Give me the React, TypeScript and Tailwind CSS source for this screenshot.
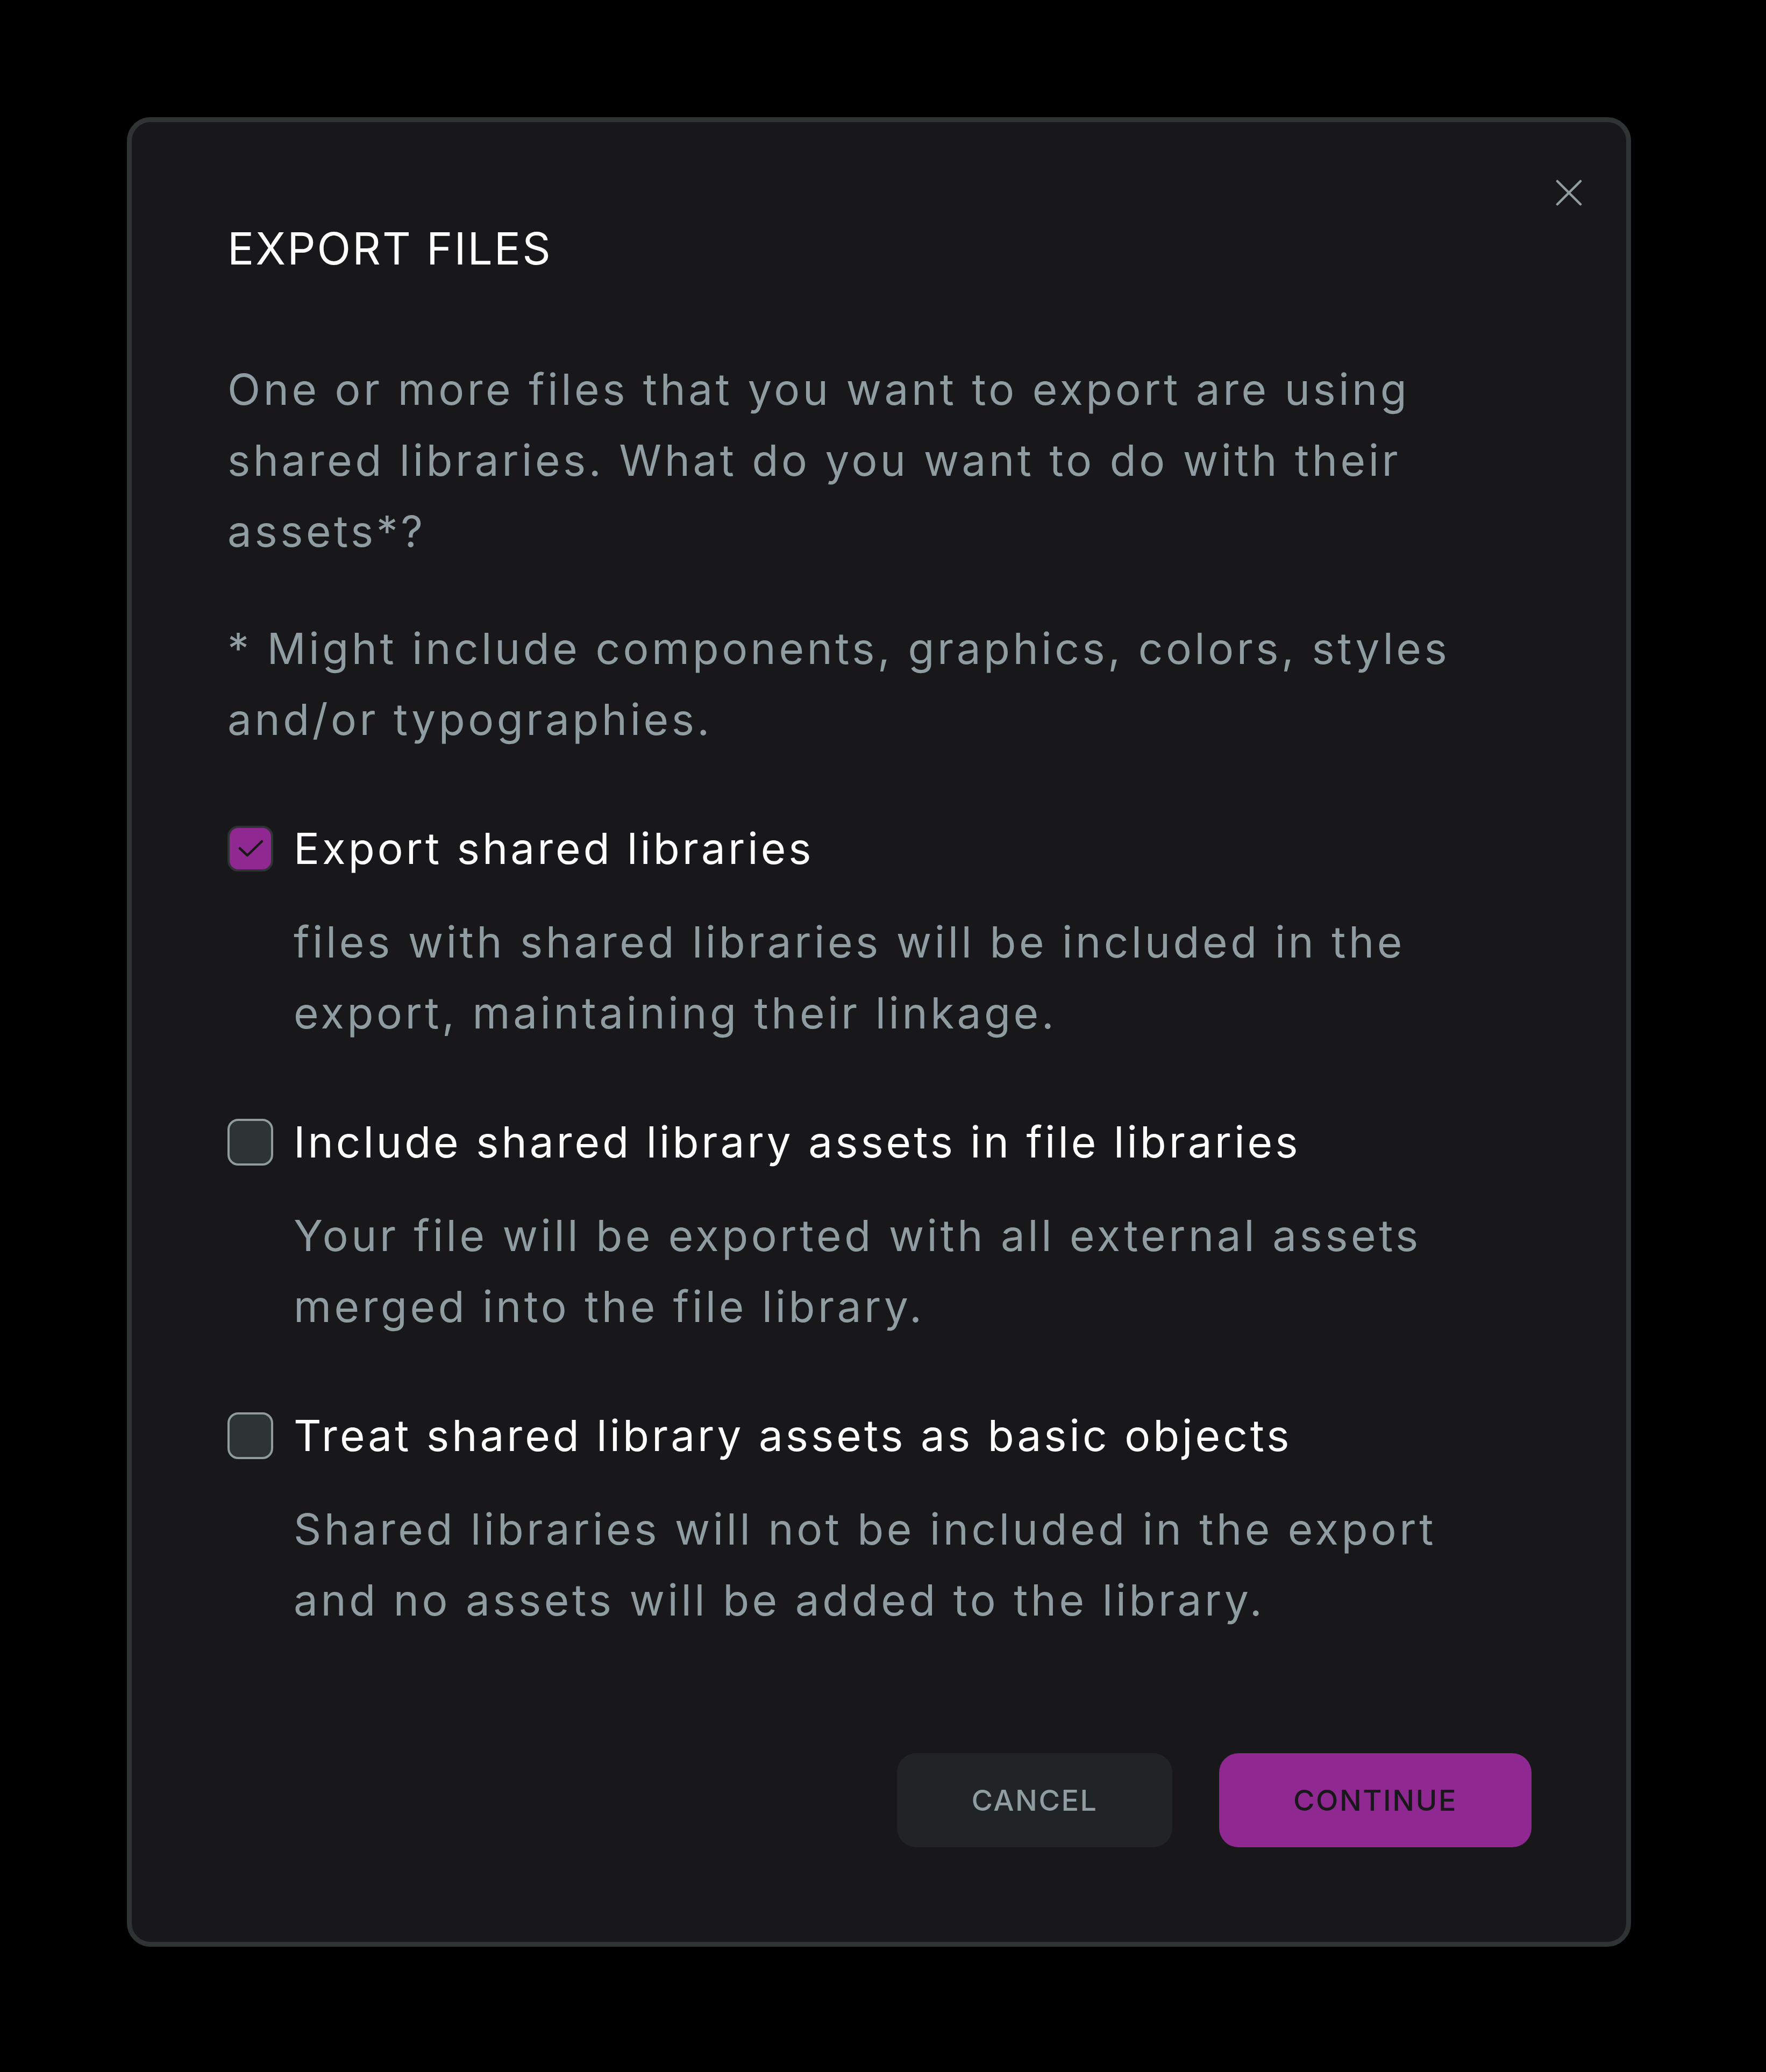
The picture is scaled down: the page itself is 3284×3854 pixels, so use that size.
import React from "react";

const font = { fontFamily: "Inter, 'Noto Sans', sans-serif" };

function Option({
  checked,
  label,
  lines,
  top,
}: {
  checked: boolean;
  label: string;
  lines: string[];
  top: string;
}) {
  return (
    <div className={`flex flex-col ${top}`}>
      <div className="flex items-center gap-[38px]">
        {checked ? (
          <div className="flex h-[85px] w-[85px] shrink-0 items-center justify-center rounded-[20px] border-[4px] border-[#2e3434] bg-[#8f2890]">
            <svg width="52" height="40" viewBox="0 0 52 40" fill="none">
              <path d="M6 20 L20 33 L47 7" stroke="#18181a" strokeWidth="4.5" strokeLinecap="round" strokeLinejoin="round" />
            </svg>
          </div>
        ) : (
          <div className="h-[87px] w-[85px] shrink-0 rounded-[20px] border-[4px] border-[#909b9b] bg-[#2e3434]" />
        )}
        <div className="whitespace-nowrap text-[80px] leading-[132px] tracking-[5px] text-white">{label}</div>
      </div>
      <div className="mt-[42px] whitespace-nowrap pl-[123px] text-[80px] leading-[132px] tracking-[5.5px] text-[#8f9da3]">
        {lines.map((l, i) => (
          <div key={i}>{l}</div>
        ))}
      </div>
    </div>
  );
}

export default function App() {
  return (
    <div className="min-h-[3854px] w-[3284px] bg-black pl-[236px] pt-[218px]" style={font}>
      <div className="relative flex h-[3403px] w-[2797px] flex-col rounded-[44px] border-[9px] border-[#2e3434] bg-[#18181a] pb-[176px] pl-[178px] pr-[176px] pt-[186px]">
        <button className="absolute right-[82px] top-[107px] h-[49px] w-[49px]">
          <svg width="49" height="49" viewBox="0 0 49 49" fill="none">
            <path d="M3 3 L46 46 M46 3 L3 46" stroke="#8f9da3" strokeWidth="4.5" strokeLinecap="round" />
          </svg>
        </button>
        <h1 className="text-[82px] font-normal leading-[100px] tracking-[3px] text-white">EXPORT FILES</h1>
        <div className="mt-[145px] whitespace-nowrap text-[80px] leading-[132px] tracking-[5.5px] text-[#8f9da3]">
          <div>One or more files that you want to export are using</div>
          <div>shared libraries. What do you want to do with their</div>
          <div>assets*?</div>
        </div>
        <div className="mt-[86px] whitespace-nowrap text-[80px] leading-[132px] tracking-[5.5px] text-[#8f9da3]">
          <div>* Might include components, graphics, colors, styles</div>
          <div>and/or typographies.</div>
        </div>
        <Option
          checked
          top="mt-[108px]"
          label="Export shared libraries"
          lines={["files with shared libraries will be included in the", "export, maintaining their linkage."]}
        />
        <Option
          checked={false}
          top="mt-[108px]"
          label="Include shared library assets in file libraries"
          lines={["Your file will be exported with all external assets", "merged into the file library."]}
        />
        <Option
          checked={false}
          top="mt-[108px]"
          label="Treat shared library assets as basic objects"
          lines={["Shared libraries will not be included in the export", "and no assets will be added to the library."]}
        />
        <div className="mt-auto flex justify-end gap-[87px]">
          <button className="flex h-[175px] w-[512px] items-center justify-center rounded-[36px] bg-[#212426] text-[54px] font-medium tracking-[2.5px] text-[#8f9da3]">
            CANCEL
          </button>
          <button className="flex h-[175px] w-[581px] items-center justify-center rounded-[36px] bg-[#8f2890] text-[54px] font-medium tracking-[2.5px] text-[#18181a]">
            CONTINUE
          </button>
        </div>
      </div>
    </div>
  );
}
